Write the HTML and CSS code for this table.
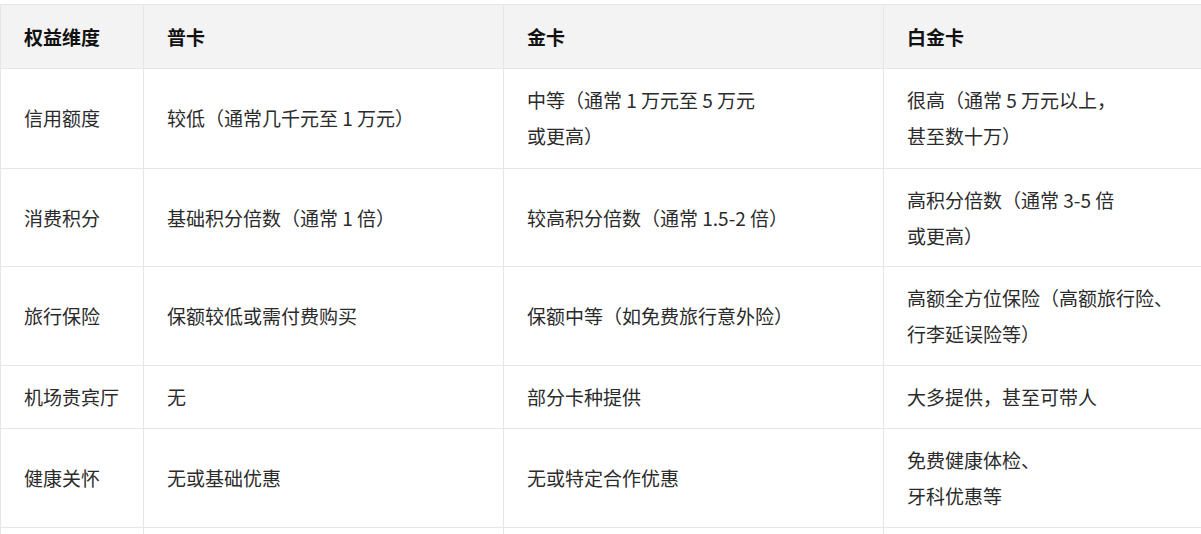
FILE: index.html
```html
<!DOCTYPE html>
<html lang="zh-CN">
<head>
<meta charset="utf-8">
<title>信用卡权益对比</title>
<link rel="stylesheet" href="styles.css">
</head>
<body>
<div class="wrap">
<table class="cmp">
  <colgroup>
    <col class="c1"><col class="c2"><col class="c3"><col class="c4">
  </colgroup>
  <thead>
    <tr><th>权益维度</th><th>普卡</th><th>金卡</th><th>白金卡</th></tr>
  </thead>
  <tbody>
    <tr class="r1"><td>信用额度</td><td>较低（通常几千元至 1 万元）</td><td>中等（通常 1 万元至 5 万元<br>或更高）</td><td>很高（通常 5 万元以上，<br>甚至数十万）</td></tr>
    <tr class="r2"><td>消费积分</td><td>基础积分倍数（通常 1 倍）</td><td>较高积分倍数（通常 1.5-2 倍）</td><td>高积分倍数（通常 3-5 倍<br>或更高）</td></tr>
    <tr><td>旅行保险</td><td>保额较低或需付费购买</td><td>保额中等（如免费旅行意外险）</td><td>高额全方位保险（高额旅行险、<br>行李延误险等）</td></tr>
    <tr><td>机场贵宾厅</td><td>无</td><td>部分卡种提供</td><td>大多提供，甚至可带人</td></tr>
    <tr><td>健康关怀</td><td>无或基础优惠</td><td>无或特定合作优惠</td><td>免费健康体检、<br>牙科优惠等</td></tr>
    <tr class="tail"><td></td><td></td><td></td><td></td></tr>
  </tbody>
</table>
</div>
</body>
</html>
```
FILE: styles.css
```css
html, body {
  margin: 0;
  padding: 0;
  background: #ffffff;
  overflow: hidden;
}
.wrap {
  padding-top: 4px;
}
.cmp {
  width: 1201px;
  border-collapse: collapse;
  table-layout: fixed;
  font-family: "Noto Sans CJK SC", "Noto Sans", sans-serif;
  font-size: 19px;
  line-height: 36px;
  color: #2b2b2b;
}
.c1 { width: 143px; }
.c2 { width: 360px; }
.c3 { width: 380px; }
.c4 { width: 318px; }
.cmp th, .cmp td {
  border: 1px solid #e6e6e6;
  padding: 13px 23px;
  text-align: left;
  vertical-align: middle;
  white-space: nowrap;
}
.cmp th {
  background: #f3f3f3;
  font-weight: 700;
  color: #111111;
  padding-top: 14px;
}
.cmp .r1 td {
  padding-bottom: 14px;
}
.cmp .r2 td {
  padding-bottom: 12px;
}
.cmp .tail td {
  height: 6px;
  padding: 0;
  line-height: 6px;
}
.cmp tr > :last-child {
  border-right: none;
}
```
